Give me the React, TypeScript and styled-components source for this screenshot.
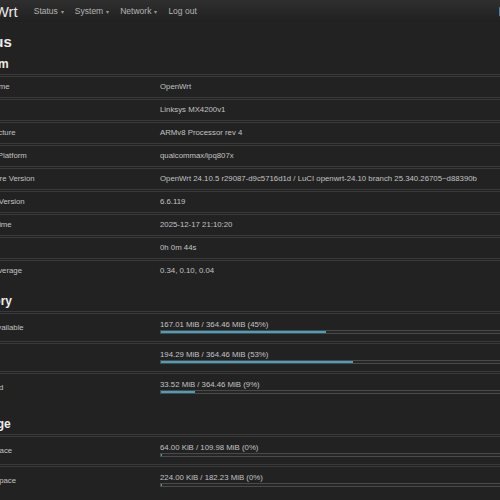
import React from "react";
import styled, { createGlobalStyle } from "styled-components";

// Dados da página de status
interface InfoRow {
  label: string;
  value: string;
}

interface UsageRow {
  label: string;
  used: string;
  total: string;
  percent: number;
}

const systemRows: InfoRow[] = [
  { label: "Hostname", value: "OpenWrt" },
  { label: "Model", value: "Linksys MX4200v1" },
  { label: "Architecture", value: "ARMv8 Processor rev 4" },
  { label: "Target Platform", value: "qualcommax/ipq807x" },
  {
    label: "Firmware Version",
    value:
      "OpenWrt 24.10.5 r29087-d9c5716d1d / LuCI openwrt-24.10 branch 25.340.26705~d88390b",
  },
  { label: "Kernel Version", value: "6.6.119" },
  { label: "Local Time", value: "2025-12-17 21:10:20" },
  { label: "Uptime", value: "0h 0m 44s" },
  { label: "Load Average", value: "0.34, 0.10, 0.04" },
];

const memoryRows: UsageRow[] = [
  { label: "Total Available", used: "167.01 MiB", total: "364.46 MiB", percent: 45.8 },
  { label: "Used", used: "194.29 MiB", total: "364.46 MiB", percent: 53.3 },
  { label: "Buffered", used: "33.52 MiB", total: "364.46 MiB", percent: 9.2 },
];

const storageRows: UsageRow[] = [
  { label: "Disk space", used: "64.00 KiB", total: "109.98 MiB", percent: 0 },
  { label: "Temp space", used: "224.00 KiB", total: "182.23 MiB", percent: 0 },
];

const menu = ["Status", "System", "Network"];

const App: React.FC = () => {
  return (
    <>
      <GlobalStyle />
      <Header>
        <HeaderInner>
          <Brand>OpenWrt</Brand>
          <Nav>
            {menu.map((item) => (
              <NavItem key={item}>
                {item}
                <Caret>▾</Caret>
              </NavItem>
            ))}
            <NavItem>Log out</NavItem>
          </Nav>
          <Badge>REFRESHING</Badge>
        </HeaderInner>
      </Header>

      <Page>
        <Title>Status</Title>

        <Section space={6}>
          <SectionTitle>System</SectionTitle>
          <Table>
            {systemRows.map((row) => (
              <Row key={row.label}>
                <LabelCell>{row.label}</LabelCell>
                <ValueCell>{row.value}</ValueCell>
              </Row>
            ))}
          </Table>
        </Section>

        <Section space={13}>
          <SectionTitle>Memory</SectionTitle>
          <Table>
            {memoryRows.map((row) => (
              <UsageItem key={row.label} row={row} />
            ))}
          </Table>
        </Section>

        <Section space={16}>
          <SectionTitle>Storage</SectionTitle>
          <Table>
            {storageRows.map((row) => (
              <UsageItem key={row.label} row={row} />
            ))}
          </Table>
        </Section>
      </Page>
    </>
  );
};

// Linha com barra de progresso
const UsageItem: React.FC<{ row: UsageRow }> = ({ row }) => (
  <Row tall>
    <LabelCell>{row.label}</LabelCell>
    <ValueCell>
      <UsageText>
        {row.used} / {row.total} ({Math.floor(row.percent)}%)
      </UsageText>
      <Track>
        <Fill style={{ width: `${row.percent}%` }} />
      </Track>
    </ValueCell>
  </Row>
);

const GlobalStyle = createGlobalStyle`
  html, body {
    margin: 0;
    padding: 0;
    background: #222222;
    overflow: hidden;
  }
  body {
    font-family: "Liberation Sans", Arial, sans-serif;
    color: #c2c2c2;
  }
`;

// Barra superior
const Header = styled.header`
  height: 22px;
  background: linear-gradient(#2f2f2f, #202020);
  overflow: hidden;
`;

const HeaderInner = styled.div`
  display: flex;
  align-items: center;
  height: 100%;
  width: 605px;
  margin-left: -42px;
`;

const Brand = styled.div`
  font-size: 15px;
  color: #e6e6e6;
  margin-right: 16px;
`;

const Nav = styled.nav`
  display: flex;
  align-items: center;
  gap: 11px;
`;

const NavItem = styled.span`
  font-size: 8.5px;
  color: #b5b5b5;
  display: flex;
  align-items: center;
`;

const Caret = styled.span`
  font-size: 6px;
  margin-left: 3px;
  color: #9a9a9a;
`;

const Badge = styled.span`
  margin-left: auto;
  margin-right: 10px;
  font-size: 7px;
  font-weight: bold;
  color: #1c4656;
  background: #86cbe2;
  border: 1px solid #3b8aa8;
  border-radius: 2px;
  padding: 1px 3px;
`;

// Conteúdo principal
const Page = styled.main`
  width: 562px;
  margin-left: -34px;
`;

const Title = styled.h2`
  margin: 11px 0 0;
  font-size: 15px;
  line-height: 18px;
  font-weight: bold;
  color: #ececec;
`;

const Section = styled.section<{ space: number }>`
  margin-top: ${({ space }) => space}px;
`;

const SectionTitle = styled.h3`
  margin: 0 0 3px;
  font-size: 12px;
  line-height: 14px;
  font-weight: bold;
  color: #ececec;
`;

const Table = styled.div`
  display: flex;
  flex-direction: column;
`;

const Row = styled.div<{ tall?: boolean }>`
  display: grid;
  grid-template-columns: 186px 1fr;
  align-items: ${({ tall }) => (tall ? "start" : "center")};
  min-height: ${({ tall }) => (tall ? "27px" : "20px")};
  border-top: 3px double #393939;
  font-size: 7.8px;
  line-height: 10px;
`;

const LabelCell = styled.div`
  padding: 0 8px;
  color: #c2c2c2;
  align-self: center;
`;

const ValueCell = styled.div`
  padding: 0 8px;
  color: #c2c2c2;
  white-space: nowrap;
`;

const UsageText = styled.div`
  padding-top: 6px;
`;

const Track = styled.div`
  height: 4px;
  box-sizing: border-box;
  background: #262626;
  border: 1px solid #4a4a4a;
  overflow: hidden;
`;

const Fill = styled.div`
  height: 100%;
  background: #48a0c0;
  box-shadow: 0 0 0 1px #48a0c0;
`;

export default App;
